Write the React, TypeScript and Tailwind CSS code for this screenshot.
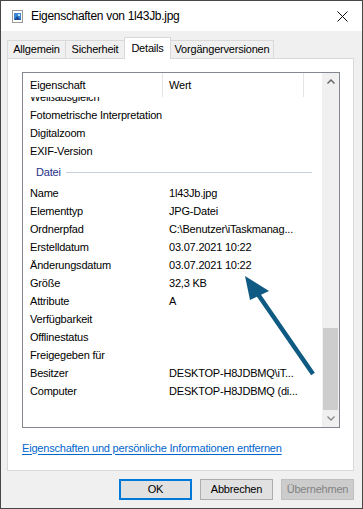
const FONT = { fontFamily: '"Liberation Sans", Arial, sans-serif' };

const META = ["Weißausgleich", "Fotometrische Interpretation", "Digitalzoom", "EXIF-Version"];

const DATEI: [string, string][] = [
  ["Name", "1l43Jb.jpg"],
  ["Elementtyp", "JPG-Datei"],
  ["Ordnerpfad", "C:\\Benutzer\\iTaskmanag..."],
  ["Erstelldatum", "03.07.2021 10:22"],
  ["Änderungsdatum", "03.07.2021 10:22"],
  ["Größe", "32,3 KB"],
  ["Attribute", "A"],
  ["Verfügbarkeit", ""],
  ["Offlinestatus", ""],
  ["Freigegeben für", ""],
  ["Besitzer", "DESKTOP-H8JDBMQ\\iT..."],
  ["Computer", "DESKTOP-H8JDBMQ (di..."],
];

const TABS = [
  { label: "Allgemein", w: "w-[59px]" },
  { label: "Sicherheit", w: "w-[60px]" },
  { label: "Details", w: "w-[47px]", active: true },
  { label: "Vorgängerversionen", w: "w-[104px]" },
];

const FileIcon = () => (
  <svg width="11" height="13" viewBox="0 0 11 13">
    <rect x="0.5" y="0.5" width="10" height="12" fill="#fff" stroke="#9a9a9a" />
    <rect x="2" y="3" width="7" height="7" fill="#3b86d6" />
    <path d="M2 10 L5 6 L9 10 Z" fill="#1b4f8f" />
    <rect x="6" y="4" width="2" height="2" fill="#bfe0ff" />
  </svg>
);

const Row = ({ name, value }: { name: string; value: string }) => (
  <div className="flex h-[18px] items-center whitespace-nowrap">
    <span className="w-[140px] pl-[7px]">{name}</span>
    <span className="pl-[6px]">{value}</span>
  </div>
);

export default function App() {
  return (
    <div
      style={FONT}
      className="relative flex h-[509px] w-[363px] flex-col border border-[#474747] bg-[#f0f0f0] text-[11px] tracking-[-0.2px] text-black"
    >
      {/* title bar */}
      <div className="flex h-[30px] items-center bg-white pl-[11px] pr-[14px]">
        <FileIcon />
        <span className="ml-[8px] text-[12px] tracking-[-0.3px]">Eigenschaften von 1l43Jb.jpg</span>
        <svg className="ml-auto" width="11" height="11" viewBox="0 0 11 11">
          <path d="M0.5 0.5 L10.5 10.5 M10.5 0.5 L0.5 10.5" stroke="#111" strokeWidth="1" />
        </svg>
      </div>

      {/* tabs */}
      <div className="mt-[7px] flex h-[20px] items-end pl-[6px]">
        {TABS.map((t) => (
          <div
            key={t.label}
            className={
              t.active
                ? `${t.w} relative z-10 -mb-px -ml-px flex h-[22px] items-center justify-center border border-b-0 border-[#d9d9d9] bg-white`
                : `${t.w} -ml-px flex h-[18px] items-center justify-center border border-b-0 border-[#d9d9d9] bg-[#f0f0f0] first:ml-0`
            }
          >
            {t.label}
          </div>
        ))}
      </div>

      {/* tab panel */}
      <div className="ml-[6px] flex h-[413px] w-[347px] flex-col border border-[#d9d9d9] bg-white pl-[14px] pt-[13px]">
        <div className="flex h-[356px] w-[318px] border border-[#828790]">
          <div className="flex w-[299px] flex-col">
            <div className="flex h-[24px] items-center">
              <span className="flex h-full w-[140px] items-center border-r border-[#e5e5e5] pl-[7px]">Eigenschaft</span>
              <span className="flex h-full w-[141px] items-center border-r border-[#e5e5e5] pl-[6px]">Wert</span>
            </div>
            <div className="flex-1 overflow-hidden">
              <div className="-mt-[9px]">
                {META.map((m) => (
                  <Row key={m} name={m} value="" />
                ))}
                <div className="flex h-[24px] items-center pl-[13px] pr-[10px]">
                  <span className="text-[#1e3287]">Datei</span>
                  <div className="ml-[5px] h-px flex-1 bg-[#c9d0de]" />
                </div>
                {DATEI.map(([n, v]) => (
                  <Row key={n} name={n} value={v} />
                ))}
              </div>
            </div>
          </div>
          <div className="flex w-[17px] flex-col bg-[#f0f0f0]">
            <div className="flex h-[17px] items-center justify-center">
              <svg width="8" height="5" viewBox="0 0 8 5">
                <path d="M0.5 4.5 L4 1 L7.5 4.5" fill="none" stroke="#606060" strokeWidth="1.4" />
              </svg>
            </div>
            <div className="flex flex-1 flex-col justify-end px-px">
              <div className="h-[82px] bg-[#cdcdcd]" />
            </div>
            <div className="flex h-[17px] items-center justify-center">
              <svg width="8" height="5" viewBox="0 0 8 5">
                <path d="M0.5 0.5 L4 4 L7.5 0.5" fill="none" stroke="#8a8a8a" strokeWidth="1.4" />
              </svg>
            </div>
          </div>
        </div>
        <div className="mt-[13px] flex h-[14px] items-center">
          <span className="text-[#0066cc] underline underline-offset-2">
            Eigenschaften und persönliche Informationen entfernen
          </span>
        </div>
      </div>

      {/* buttons */}
      <div className="mt-[8px] flex justify-end gap-[8px] pr-[8px]">
        <button className="flex h-[21px] w-[73px] items-center justify-center border-2 border-[#0078d7] bg-[#e1e1e1]">
          OK
        </button>
        <button className="flex h-[21px] w-[73px] items-center justify-center border border-[#adadad] bg-[#e1e1e1]">
          Abbrechen
        </button>
        <button className="flex h-[21px] w-[73px] items-center justify-center border border-[#bfbfbf] bg-[#cccccc] text-[#838383]">
          Übernehmen
        </button>
      </div>

      {/* annotation arrow */}
      <svg className="pointer-events-none absolute left-[-1px] top-[-1px]" width="363" height="509" viewBox="0 0 363 509">
        <line x1="313" y1="374" x2="255" y2="290" stroke="#0f5a82" strokeWidth="4.5" />
        <polygon points="245,276 250,300 269,291" fill="#0f5a82" />
      </svg>
    </div>
  );
}
